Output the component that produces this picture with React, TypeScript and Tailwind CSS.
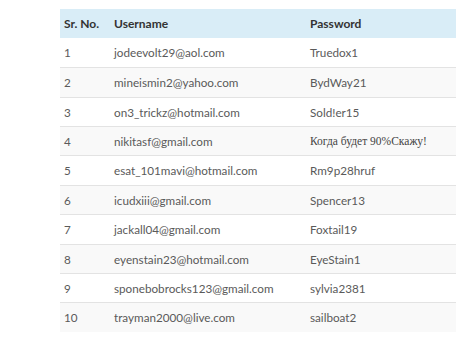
const rows = [
  ['1', 'jodeevolt29@aol.com', 'Truedox1'],
  ['2', 'mineismin2@yahoo.com', 'BydWay21'],
  ['3', 'on3_trickz@hotmail.com', 'Sold!er15'],
  ['4', 'nikitasf@gmail.com', 'Когда будет 90%Скажу!'],
  ['5', 'esat_101mavi@hotmail.com', 'Rm9p28hruf'],
  ['6', 'icudxiii@gmail.com', 'Spencer13'],
  ['7', 'jackall04@gmail.com', 'Foxtail19'],
  ['8', 'eyenstain23@hotmail.com', 'EyeStain1'],
  ['9', 'sponebobrocks123@gmail.com', 'sylvia2381'],
  ['10', 'trayman2000@live.com', 'sailboat2'],
];

export default function App() {
  return (
    <div className="h-[348px] w-[474px] bg-white pt-[8.5px] pl-[60px] font-['Lato',sans-serif] text-[11.7px]">
      <div className="w-[396px]">
        {/* Header */}
        <div className="flex h-[29.4px] items-center bg-[#d9edf7] pt-[1px] text-[12px] font-bold text-[#333]">
          <div className="w-[54px] pl-[4px]">Sr. No.</div>
          <div className="w-[196px]">Username</div>
          <div>Password</div>
        </div>
        {rows.map(([n, user, pass], i) => (
          <div
            key={n}
            className={
              'flex h-[29.4px] items-center pt-[1px] text-[#5a5a5a] ' +
              (i > 0 ? 'border-t border-[#e3e3e3] ' : '') +
              (i % 2 === 1 ? 'bg-[#f9f9f9]' : 'bg-white')
            }
          >
            <div className="w-[54px] pl-[4px]">{n}</div>
            <div className="w-[196px]">{user}</div>
            <div className={i === 3 ? "font-['Liberation_Serif',serif] text-[11.5px] text-[#444]" : ''}>{pass}</div>
          </div>
        ))}
      </div>
    </div>
  );
}
